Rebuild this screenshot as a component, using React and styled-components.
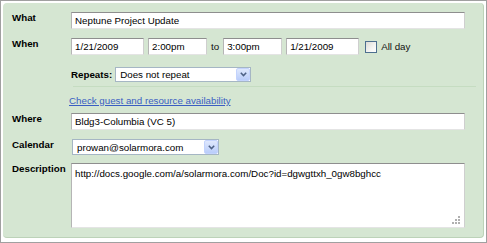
import React from 'react';
import styled, { createGlobalStyle } from 'styled-components';

const GlobalStyle = createGlobalStyle`
  html, body {
    margin: 0;
    padding: 0;
    background: #ffffff;
  }
  body {
    font-family: 'Liberation Sans', Arial, sans-serif;
    font-size: 9.75px;
    color: #000;
  }
`;

// --- Frame and panel ---
const Frame = styled.div`
  width: 487px;
  height: 243px;
  box-sizing: border-box;
  border: 1px solid #a0a0a0;
  padding: 2px 2px 4px 2px;
  background: #fff;
`;

const Panel = styled.div`
  height: 100%;
  box-sizing: border-box;
  background: #d5e6d2;
  border-radius: 4px;
  border-right: 1px solid #bcd2b8;
  border-bottom: 1px solid #bcd2b8;
  padding: 9px 18px 0 9px;
  display: flex;
  flex-direction: column;
`;

const Row = styled.div`
  display: flex;
  align-items: ${p => (p.$center ? 'center' : 'flex-start')};
  margin-top: ${p => p.$mt || 0}px;
`;

const Label = styled.div`
  width: 59px;
  flex-shrink: 0;
  font-weight: bold;
  color: #000;
  line-height: 12px;
`;

const Indent = styled.div`
  margin-left: 59px;
  margin-top: ${p => p.$mt || 0}px;
`;

const TextBox = styled.div`
  box-sizing: border-box;
  height: 17px;
  width: ${p => (p.$w ? `${p.$w}px` : 'auto')};
  flex: ${p => (p.$w ? 'none' : '1')};
  background: #fff;
  border: 1px solid;
  border-color: #8e8e8e #cfcfcf #e4e4e4 #b5b5b5;
  padding: 0 3px;
  line-height: 15px;
  white-space: nowrap;
  overflow: hidden;
  color: #000;
`;

const Inline = styled.div`
  display: flex;
  align-items: center;
  gap: 4px;
  flex: 1;
`;

const Plain = styled.span`
  margin: 0 ${p => p.$mx || 0}px;
  color: #111;
`;

const CheckBox = styled.span`
  display: inline-block;
  box-sizing: border-box;
  width: 12px;
  height: 12px;
  margin-left: 2px;
  border: 1px solid #4d6f8f;
  background: linear-gradient(135deg, #dcdcd6 0%, #f4f4f2 60%, #ffffff 100%);
`;

const SmallBold = styled.span`
  font-weight: bold;
  margin-right: 3px;
`;

const Select = styled.div`
  box-sizing: border-box;
  display: flex;
  align-items: center;
  width: ${p => p.$w}px;
  height: ${p => p.$h}px;
  margin-left: ${p => p.$ml || 0}px;
  background: #fff;
  border: 1px solid #a5b6c4;
  padding-left: 4px;
  line-height: 13px;
`;

const SelectText = styled.span`
  flex: 1;
  white-space: nowrap;
  overflow: hidden;
`;

const Arrow = styled.span`
  box-sizing: border-box;
  width: 14px;
  height: 100%;
  border: 1px solid #c3d3fd;
  border-radius: 2px;
  background: linear-gradient(#dfe8fd, #b9cdfa);
  display: flex;
  align-items: center;
  justify-content: center;
`;

const Separator = styled.div`
  height: 1px;
  margin: 4px 0 0 61px;
  background: #c5dcc1;
  width: 403px;
`;

const Link = styled.a`
  color: #3a5ec2;
  text-decoration: underline;
  cursor: pointer;
  margin-left: -2px;
`;

const AreaWrap = styled.div`
  position: relative;
  flex: 1;
`;

const TextArea = styled.textarea`
  display: block;
  box-sizing: border-box;
  width: 100%;
  height: 65px;
  resize: none;
  margin: 0;
  border: 1px solid;
  border-color: #8e8e8e #cfcfcf #e4e4e4 #b5b5b5;
  padding: 4px 3px;
  font-family: 'Liberation Sans', Arial, sans-serif;
  font-size: 9.75px;
  line-height: 12px;
  color: #000;
  background: #fff;
`;

const Grip = styled.svg`
  position: absolute;
  right: 4px;
  bottom: 3px;
`;

const Chevron = () => (
  <svg width="7" height="5" viewBox="0 0 7 5">
    <path d="M0.8 0.8 L3.5 3.6 L6.2 0.8" fill="none" stroke="#4d6185" strokeWidth="1.5" />
  </svg>
);

const App = () => {
  return (
    <>
      <GlobalStyle />
      <Frame>
        <Panel>
          <Row $mt={0}>
            <Label>What</Label>
            <TextBox>Neptune Project Update</TextBox>
          </Row>

          <Row $mt={9}>
            <Label>When</Label>
            <Inline>
              <TextBox $w={73}>1/21/2009</TextBox>
              <TextBox $w={59}>2:00pm</TextBox>
              <Plain>to</Plain>
              <TextBox $w={59}>3:00pm</TextBox>
              <TextBox $w={73}>1/21/2009</TextBox>
              <CheckBox />
              <Plain>All day</Plain>
            </Inline>
          </Row>

          <Indent $mt={12}>
            <Row $center>
              <SmallBold>Repeats:</SmallBold>
              <Select $w={136} $h={15}>
                <SelectText>Does not repeat</SelectText>
                <Arrow><Chevron /></Arrow>
              </Select>
            </Row>
          </Indent>

          <Separator />

          <Indent $mt={8}>
            <Link>Check guest and resource availability</Link>
          </Indent>

          <Row $mt={7}>
            <Label>Where</Label>
            <TextBox>Bldg3-Columbia (VC 5)</TextBox>
          </Row>

          <Row $mt={9}>
            <Label>Calendar</Label>
            <Select $w={147} $h={16} $ml={1}>
              <SelectText>prowan@solarmora.com</SelectText>
              <Arrow><Chevron /></Arrow>
            </Select>
          </Row>

          <Row $mt={8}>
            <Label>Description</Label>
            <AreaWrap>
              <TextArea
                readOnly
                defaultValue="http://docs.google.com/a/solarmora.com/Doc?id=dgwgttxh_0gw8bghcc"
              />
              <Grip width="9" height="9" viewBox="0 0 9 9">
                <rect x="6" y="0" width="2" height="2" fill="#b0b0b0" />
                <rect x="3" y="3" width="2" height="2" fill="#b0b0b0" />
                <rect x="6" y="3" width="2" height="2" fill="#b0b0b0" />
                <rect x="0" y="6" width="2" height="2" fill="#b0b0b0" />
                <rect x="3" y="6" width="2" height="2" fill="#b0b0b0" />
                <rect x="6" y="6" width="2" height="2" fill="#b0b0b0" />
              </Grip>
            </AreaWrap>
          </Row>
        </Panel>
      </Frame>
    </>
  );
};

export default App;
